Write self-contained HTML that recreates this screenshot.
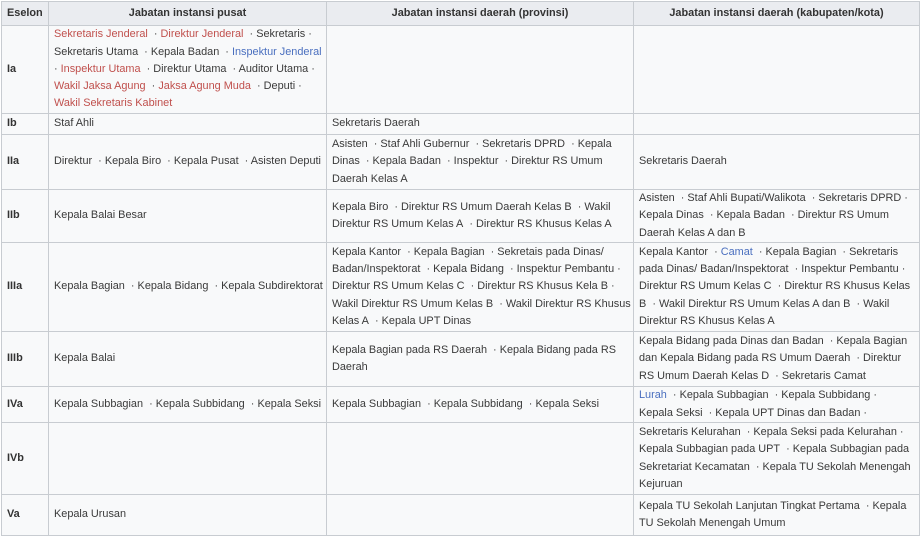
<!DOCTYPE html>
<html><head><meta charset="utf-8"><style>
html,body{margin:0;padding:0;background:#fff;width:922px;height:538px;overflow:hidden}
table{position:absolute;left:1px;top:1px;border-collapse:collapse;table-layout:fixed;width:918px;background:#f8f9fa;font-family:"Liberation Sans",Arial,sans-serif;font-size:10.9px;color:#3a3a3a;line-height:17.3px}
td,th{border:1px solid #c8ccd1;padding:0 5px;vertical-align:middle;white-space:nowrap;overflow:hidden}
th{background:#eaecf0;font-weight:bold;color:#333;height:23px;text-align:center}
th.e{text-align:left}
td.e{font-weight:bold;color:#333}
.r{color:#c0504d}.b{color:#4a6fbf}
</style></head><body>
<table>
<colgroup><col style="width:47px"><col style="width:278px"><col style="width:307px"><col style="width:286px"></colgroup>
<tr><th class="e">Eselon</th><th>Jabatan instansi pusat</th><th>Jabatan instansi daerah (provinsi)</th><th>Jabatan instansi daerah (kabupaten/kota)</th></tr>
<tr style="height:88px"><td class="e">Ia</td><td><span class="r">Sekretaris Jenderal</span>&nbsp; · <span class="r">Direktur Jenderal</span>&nbsp; · Sekretaris ·<br>Sekretaris Utama&nbsp; · Kepala Badan&nbsp; · <span class="b">Inspektur Jenderal</span><br>· <span class="r">Inspektur Utama</span>&nbsp; · Direktur Utama&nbsp; · Auditor Utama ·<br><span class="r">Wakil Jaksa Agung</span>&nbsp; · <span class="r">Jaksa Agung Muda</span>&nbsp; · Deputi ·<br><span class="r">Wakil Sekretaris Kabinet</span></td><td></td><td></td></tr>
<tr style="height:21px"><td class="e">Ib</td><td>Staf Ahli</td><td>Sekretaris Daerah</td><td></td></tr>
<tr style="height:55px"><td class="e">IIa</td><td>Direktur&nbsp; · Kepala Biro&nbsp; · Kepala Pusat&nbsp; · Asisten Deputi</td><td>Asisten&nbsp; · Staf Ahli Gubernur&nbsp; · Sekretaris DPRD&nbsp; · Kepala<br>Dinas&nbsp; · Kepala Badan&nbsp; · Inspektur&nbsp; · Direktur RS Umum<br>Daerah Kelas A</td><td>Sekretaris Daerah</td></tr>
<tr style="height:53px"><td class="e">IIb</td><td>Kepala Balai Besar</td><td>Kepala Biro&nbsp; · Direktur RS Umum Daerah Kelas B&nbsp; · Wakil<br>Direktur RS Umum Kelas A&nbsp; · Direktur RS Khusus Kelas A</td><td>Asisten&nbsp; · Staf Ahli Bupati/Walikota&nbsp; · Sekretaris DPRD ·<br>Kepala Dinas&nbsp; · Kepala Badan&nbsp; · Direktur RS Umum<br>Daerah Kelas A dan B</td></tr>
<tr style="height:89px"><td class="e">IIIa</td><td>Kepala Bagian&nbsp; · Kepala Bidang&nbsp; · Kepala Subdirektorat</td><td>Kepala Kantor&nbsp; · Kepala Bagian&nbsp; · Sekretais pada Dinas/<br>Badan/Inspektorat&nbsp; · Kepala Bidang&nbsp; · Inspektur Pembantu ·<br>Direktur RS Umum Kelas C&nbsp; · Direktur RS Khusus Kela B ·<br>Wakil Direktur RS Umum Kelas B&nbsp; · Wakil Direktur RS Khusus<br>Kelas A&nbsp; · Kepala UPT Dinas</td><td>Kepala Kantor&nbsp; · <span class="b">Camat</span>&nbsp; · Kepala Bagian&nbsp; · Sekretaris<br>pada Dinas/ Badan/Inspektorat&nbsp; · Inspektur Pembantu ·<br>Direktur RS Umum Kelas C&nbsp; · Direktur RS Khusus Kelas<br>B&nbsp; · Wakil Direktur RS Umum Kelas A dan B&nbsp; · Wakil<br>Direktur RS Khusus Kelas A</td></tr>
<tr style="height:55px"><td class="e">IIIb</td><td>Kepala Balai</td><td>Kepala Bagian pada RS Daerah&nbsp; · Kepala Bidang pada RS<br>Daerah</td><td>Kepala Bidang pada Dinas dan Badan&nbsp; · Kepala Bagian<br>dan Kepala Bidang pada RS Umum Daerah&nbsp; · Direktur<br>RS Umum Daerah Kelas D&nbsp; · Sekretaris Camat</td></tr>
<tr style="height:36px"><td class="e">IVa</td><td>Kepala Subbagian&nbsp; · Kepala Subbidang&nbsp; · Kepala Seksi</td><td>Kepala Subbagian&nbsp; · Kepala Subbidang&nbsp; · Kepala Seksi</td><td><span class="b">Lurah</span>&nbsp; · Kepala Subbagian&nbsp; · Kepala Subbidang ·<br>Kepala Seksi&nbsp; · Kepala UPT Dinas dan Badan ·</td></tr>
<tr style="height:72px"><td class="e">IVb</td><td></td><td></td><td>Sekretaris Kelurahan&nbsp; · Kepala Seksi pada Kelurahan ·<br>Kepala Subbagian pada UPT&nbsp; · Kepala Subbagian pada<br>Sekretariat Kecamatan&nbsp; · Kepala TU Sekolah Menengah<br>Kejuruan</td></tr>
<tr style="height:41px"><td class="e">Va</td><td>Kepala Urusan</td><td></td><td>Kepala TU Sekolah Lanjutan Tingkat Pertama&nbsp; · Kepala<br>TU Sekolah Menengah Umum</td></tr>
</table>
</body></html>
